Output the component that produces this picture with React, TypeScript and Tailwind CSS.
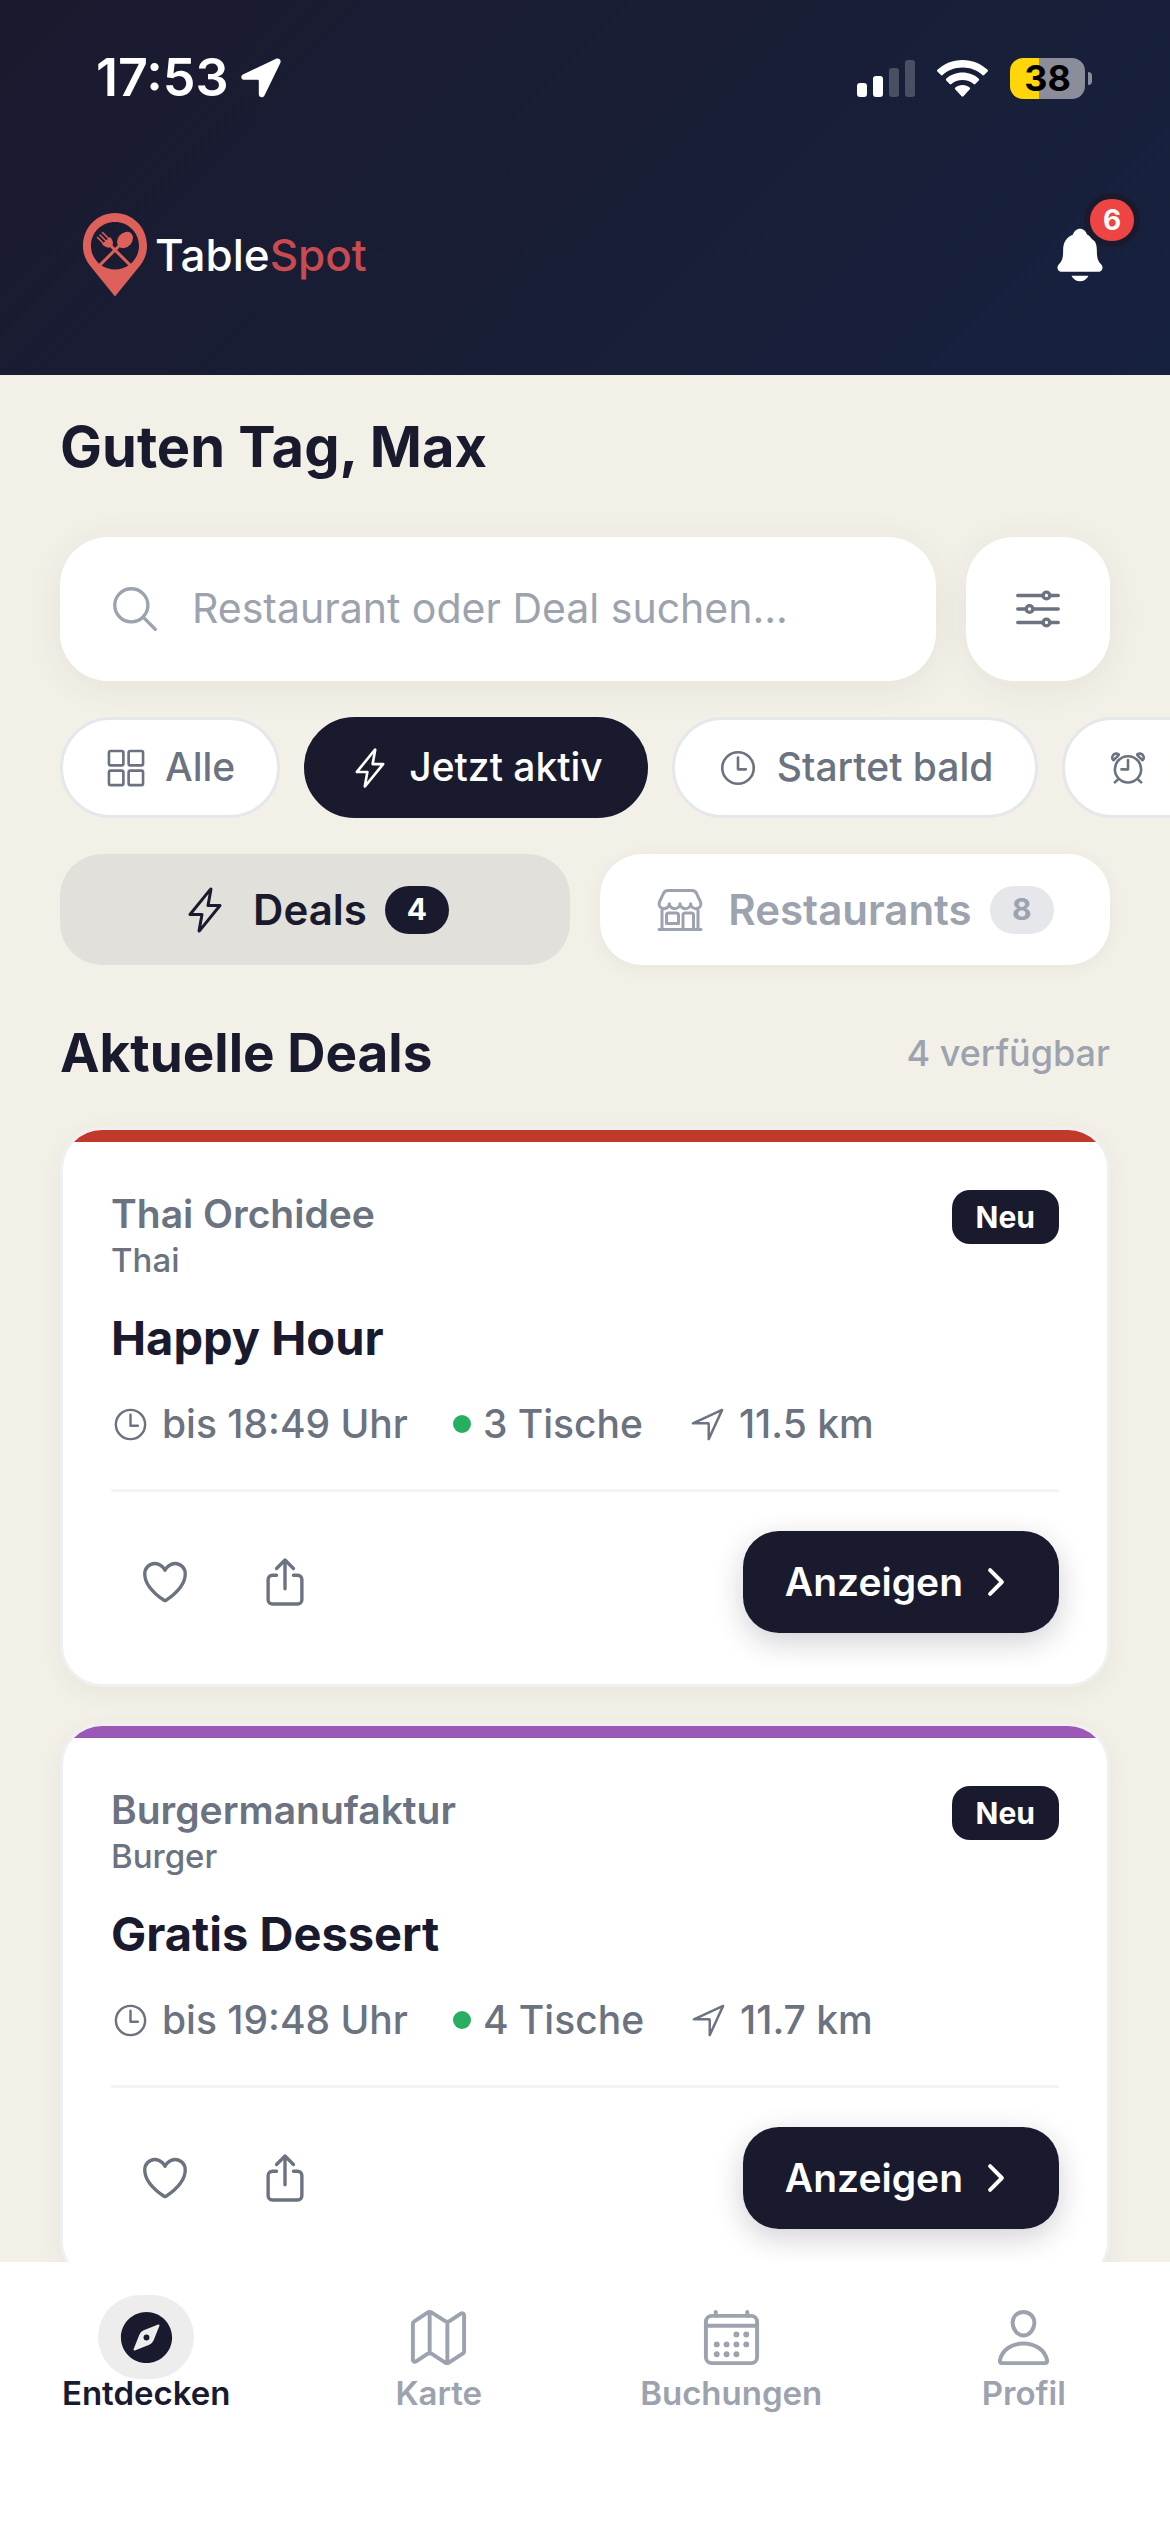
import { useState } from "react";
import { clsx } from "clsx";
import type { IconType } from "react-icons";
import {
  IoAlarmOutline,
  IoCalendarOutline,
  IoChevronForward,
  IoCompass,
  IoFlashOutline,
  IoGridOutline,
  IoHeartOutline,
  IoMapOutline,
  IoNavigateOutline,
  IoNotifications,
  IoOptionsOutline,
  IoPersonOutline,
  IoSearchOutline,
  IoShareOutline,
  IoStorefrontOutline,
  IoTimeOutline
} from "react-icons/io5";

interface Deal {
  id: number;
  restaurant: string;
  cuisine: string;
  title: string;
  until: string;
  tables: number;
  distance: string;
  accent: string;
}

interface IconItem {
  label: string;
  icon: IconType;
}

interface TabItem extends IconItem {
  count: number;
}

const deals: Deal[] = [
  {
    id: 1,
    restaurant: "Thai Orchidee",
    cuisine: "Thai",
    title: "Happy Hour",
    until: "18:49",
    tables: 3,
    distance: "11.5 km",
    accent: "bg-[#c0392b]"
  },
  {
    id: 2,
    restaurant: "Burgermanufaktur",
    cuisine: "Burger",
    title: "Gratis Dessert",
    until: "19:48",
    tables: 4,
    distance: "11.7 km",
    accent: "bg-[#9b59b6]"
  }
];

const filters: IconItem[] = [
  { label: "Alle", icon: IoGridOutline },
  { label: "Jetzt aktiv", icon: IoFlashOutline },
  { label: "Startet bald", icon: IoTimeOutline },
  { label: "Endet bald", icon: IoAlarmOutline }
];

const tabs: TabItem[] = [
  { label: "Deals", icon: IoFlashOutline, count: 4 },
  { label: "Restaurants", icon: IoStorefrontOutline, count: 8 }
];

const navItems: IconItem[] = [
  { label: "Entdecken", icon: IoCompass },
  { label: "Karte", icon: IoMapOutline },
  { label: "Buchungen", icon: IoCalendarOutline },
  { label: "Profil", icon: IoPersonOutline }
];

function StatusBar() {
  return (
    <div className="flex h-[156px] items-center justify-between pr-[78px] pl-24">
      <div className="flex items-center gap-3">
        <span className="text-[52px] font-semibold">17:53</span>
        <svg className="size-10" viewBox="0 0 40 40" fill="currentColor" aria-hidden="true">
          <path d="M34.6.9 2.4 16.2C-.9 17.8-.2 21.8 3.4 21.8h13.2c.8 0 1.2.4 1.2 1.2v13c0 3.700 4.300 4.600 5.800 1.300L39.300 5c1.400-3-1.600-5.600-4.700-4.100Z" />
        </svg>
      </div>
      <div className="flex items-center gap-[22px]">
        <svg className="h-[37px] w-[58px]" viewBox="0 0 58 37" fill="currentColor" aria-hidden="true">
          <rect x="0" y="23" width="10" height="14" rx="3" />
          <rect x="16" y="16" width="10" height="21" rx="3" />
          <rect x="32" y="8" width="10" height="29" rx="3" opacity="0.22" />
          <rect x="48" y="0" width="10" height="37" rx="3" opacity="0.22" />
        </svg>
        <svg className="h-[37px] w-[51px]" viewBox="0 0 51 37" fill="currentColor" aria-hidden="true">
          <path d="M25.500 0C15.800 0 7 3.700.4 9.800c-.5.500-.5 1.200 0 1.700l3.500 3.500c.5.500 1.200.5 1.700 0C10.800 10.200 17.800 7.500 25.500 7.500s14.700 2.700 19.900 7.500c.5.500 1.200.5 1.700 0l3.500-3.500c.5-.5.5-1.200 0-1.700C44 3.700 35.200 0 25.500 0Z" />
          <path d="M25.500 12.500c-6.200 0-12 2.300-16.300 6.200-.5.500-.5 1.200 0 1.700l3.500 3.600c.5.500 1.200.5 1.700 0 2.900-2.600 6.800-4.100 11.100-4.100s8.200 1.500 11.100 4.100c.5.500 1.200.5 1.700 0l3.500-3.600c.5-.5.5-1.200 0-1.700-4.300-3.900-10.100-6.200-16.300-6.200Z" />
          <path d="M25.500 25c-2.800 0-5.300 1-7.200 2.600-.5.500-.6 1.200-.1 1.700l6.400 7c.5.500 1.300.5 1.800 0l6.400-7c.5-.5.4-1.200-.1-1.700-1.900-1.600-4.400-2.600-7.200-2.600Z" />
        </svg>
        <div className="flex items-center gap-[3px]">
          <span className="flex h-[41px] w-[75px] items-center justify-center rounded-[13px] bg-linear-to-r from-[#ffd60a] from-39% to-[#8b8d9b] to-39% text-[36px] leading-none font-bold text-black">
            38
          </span>
          <span className="h-[13px] w-1 rounded-r-full bg-[#8b8d9b]" />
        </div>
      </div>
    </div>
  );
}

function Logo() {
  return (
    <div className="flex items-center gap-2">
      <svg className="h-[84px] w-16" viewBox="0 0 64 84" aria-hidden="true">
        <path
          fill="#de605b"
          fillRule="evenodd"
          d="M32 0C14.300 0 0 14.300 0 33c0 7.500 2.500 13.500 6.500 19L32 83.500 57.500 52C61.500 46.500 64 40.500 64 33 64 14.300 49.700 0 32 0Zm0 9c13.300 0 24 10.500 24 23.700S45.300 56.500 32 56.500 8 46 8 32.700 18.700 9 32 9Z"
        />
        <g stroke="#de605b" strokeLinecap="round" fill="none">
          <path strokeWidth="3" d="M26 31 48 53M38 31 16 53" />
          <path strokeWidth="1.500" d="m14.500 24.500 7 7m-4.500-9.500 7 7m-4.500-9.500 7 7" />
        </g>
        <path fill="#de605b" d="m19 31 8-7c3 3 4 7 1.500 9.500S21.500 34 19 31Z" />
        <ellipse fill="#de605b" cx="42" cy="27" rx="7" ry="9" transform="rotate(42 42 27)" />
      </svg>
      <span className="text-[44px] leading-none font-medium">
        Table<span className="text-[#c94a50]">Spot</span>
      </span>
    </div>
  );
}

function Header() {
  return (
    <header className="shrink-0 bg-linear-135 from-[#1a1a2e] to-[#16213e] pb-[21px] text-white">
      <StatusBar />
      <div className="flex h-[198px] items-center justify-between pr-[60px] pl-[83px]">
        <Logo />
        <button type="button" className="relative" aria-label="Benachrichtigungen">
          <IoNotifications className="size-[60px]" />
          <span className="absolute -top-8 -right-[30px] flex h-[54px] w-14 items-center justify-center rounded-full border-6 border-[#1a1a2e] bg-[#ef4444] text-[28px] leading-none font-bold">
            6
          </span>
        </button>
      </div>
    </header>
  );
}

function SearchRow() {
  return (
    <div className="flex gap-[30px] px-[60px]">
      <label className="flex h-36 min-w-0 flex-1 items-center gap-[30px] rounded-[48px] bg-white px-12 shadow-[0_6px_36px_rgba(60,60,20,0.07)]">
        <IoSearchOutline className="size-[54px] shrink-0 text-[#9ca3af]" />
        <input
          className="min-w-0 flex-1 bg-transparent text-[41px] outline-none placeholder:text-[#9ca3af]"
          type="search"
          aria-label="Suche"
          placeholder="Restaurant oder Deal suchen..."
        />
      </label>
      <button
        className="flex size-36 items-center justify-center rounded-[48px] bg-white text-[#6b7280] shadow-[0_6px_36px_rgba(60,60,20,0.07)]"
        type="button"
        aria-label="Filter"
      >
        <IoOptionsOutline className="size-[54px]" />
      </button>
    </div>
  );
}

function FilterChips() {
  const [active, setActive] = useState("Jetzt aktiv");

  return (
    <div className="mt-9 flex gap-6 overflow-x-auto px-[60px] [scrollbar-width:none]">
      {filters.map(({ label, icon: Icon }) => (
        <button
          key={label}
          className={clsx(
            "flex h-[101px] shrink-0 items-center gap-[18px] rounded-full border-3 px-[42px] text-[39px] font-medium whitespace-nowrap",
            active === label
              ? "border-[#1a1a2e] bg-[#1a1a2e] text-white"
              : "border-gray-200 bg-white text-[#6b7280]"
          )}
          type="button"
          onClick={() => setActive(label)}
        >
          <Icon className="size-[42px]" />
          {label}
        </button>
      ))}
    </div>
  );
}

function ViewTabs() {
  const [active, setActive] = useState("Deals");

  return (
    <div className="mt-9 grid grid-cols-2 gap-[30px] px-[60px]">
      {tabs.map(({ label, icon: Icon, count }) => (
        <button
          key={label}
          className={clsx(
            "flex h-[111px] items-center justify-center rounded-[42px] text-[42px] font-semibold",
            active === label
              ? "bg-[#e1e0da] text-[#1a1a2e]"
              : "bg-white text-[#9ca3af] shadow-[0_3px_18px_rgba(60,60,20,0.06)]"
          )}
          type="button"
          onClick={() => setActive(label)}
        >
          <Icon className="size-12" />
          <span className="ml-6">{label}</span>
          <span
            className={clsx(
              "ml-[18px] flex h-12 w-16 items-center justify-center rounded-full text-[30px] font-bold",
              active === label ? "bg-[#1a1a2e] text-white" : "bg-gray-200"
            )}
          >
            {count}
          </span>
        </button>
      ))}
    </div>
  );
}

function DealCard({ deal }: { deal: Deal }) {
  return (
    <article className="overflow-hidden rounded-[42px] border-3 border-[#f0f0f1] bg-white shadow-[0_6px_24px_rgba(60,60,20,0.06)]">
      <div className={clsx("h-3", deal.accent)} />
      <div className="px-12 pt-12 pb-[51px]">
        <div className="flex items-start justify-between text-[#6b7280]">
          <div>
            <p className="text-[39px] leading-12 font-semibold">{deal.restaurant}</p>
            <p className="text-[33px] leading-11 font-medium">{deal.cuisine}</p>
          </div>
          <span className="flex h-[54px] items-center rounded-[18px] bg-[#1a1a2e] px-6 text-[30px] font-bold text-white">
            Neu
          </span>
        </div>
        <h3 className="mt-[26px] text-[47px] leading-15 font-bold">{deal.title}</h3>
        <div className="mt-8 flex items-center gap-[45px] text-[39px] leading-12 font-medium text-[#6b7280]">
          <span className="flex items-center gap-3">
            <IoTimeOutline className="size-[39px]" />
            bis {deal.until} Uhr
          </span>
          <span className="flex items-center gap-3">
            <span className="size-[18px] rounded-full bg-[#27ae60]" />
            {deal.tables} Tische
          </span>
          <span className="flex items-center gap-3">
            <IoNavigateOutline className="size-[39px]" />
            {deal.distance}
          </span>
        </div>
        <div className="mt-[41px] flex items-center gap-3 border-t-3 border-gray-100 pt-[39px]">
          <button
            className="flex h-[102px] w-[108px] items-center justify-center text-[#6b7280]"
            type="button"
            aria-label="Merken"
          >
            <IoHeartOutline className="size-[54px]" />
          </button>
          <button
            className="flex h-[102px] w-[108px] items-center justify-center text-[#6b7280]"
            type="button"
            aria-label="Teilen"
          >
            <IoShareOutline className="size-[54px]" />
          </button>
          <button
            className="ml-auto flex h-[102px] items-center gap-3 rounded-[36px] bg-[#1a1a2e] px-[42px] text-[39px] font-semibold text-white shadow-[0_9px_30px_rgba(26,26,46,0.2)]"
            type="button"
          >
            Anzeigen
            <IoChevronForward className="size-[42px]" />
          </button>
        </div>
      </div>
    </article>
  );
}

function BottomNav() {
  const [active, setActive] = useState("Entdecken");

  return (
    <nav className="grid h-[270px] shrink-0 grid-cols-4 items-start bg-white pt-[33px]">
      {navItems.map(({ label, icon: Icon }) => (
        <button
          key={label}
          className={clsx(
            "flex flex-col items-center text-[33px] leading-7 font-semibold",
            active === label ? "text-[#1a1a2e]" : "text-[#9ca3af]"
          )}
          type="button"
          onClick={() => setActive(label)}
        >
          <span
            className={clsx(
              "flex h-[84px] w-24 items-center justify-center rounded-full",
              active === label && "bg-[#ededed]"
            )}
          >
            <Icon className="size-[63px]" />
          </span>
          {label}
        </button>
      ))}
    </nav>
  );
}

export default function App() {
  return (
    <div className="flex h-screen flex-col bg-[#f3f0e8] font-[Inter,'Noto_Sans',sans-serif] text-[#1a1a2e]">
      <Header />
      <main className="min-h-0 flex-1 overflow-y-auto pt-9 [scrollbar-width:none]">
        <h1 className="mb-[54px] px-[60px] text-[56px] leading-18 font-bold">Guten Tag, Max</h1>
        <SearchRow />
        <FilterChips />
        <ViewTabs />
        <section className="px-[60px] pt-[58px] pb-9">
          <div className="mb-11 flex items-center justify-between">
            <h2 className="text-[53px] leading-15 font-bold">Aktuelle Deals</h2>
            <span className="text-[36px] font-medium text-[#9ca3af]">4 verfügbar</span>
          </div>
          <div className="flex flex-col gap-9">
            {deals.map((deal) => (
              <DealCard key={deal.id} deal={deal} />
            ))}
          </div>
        </section>
      </main>
      <BottomNav />
    </div>
  );
}
